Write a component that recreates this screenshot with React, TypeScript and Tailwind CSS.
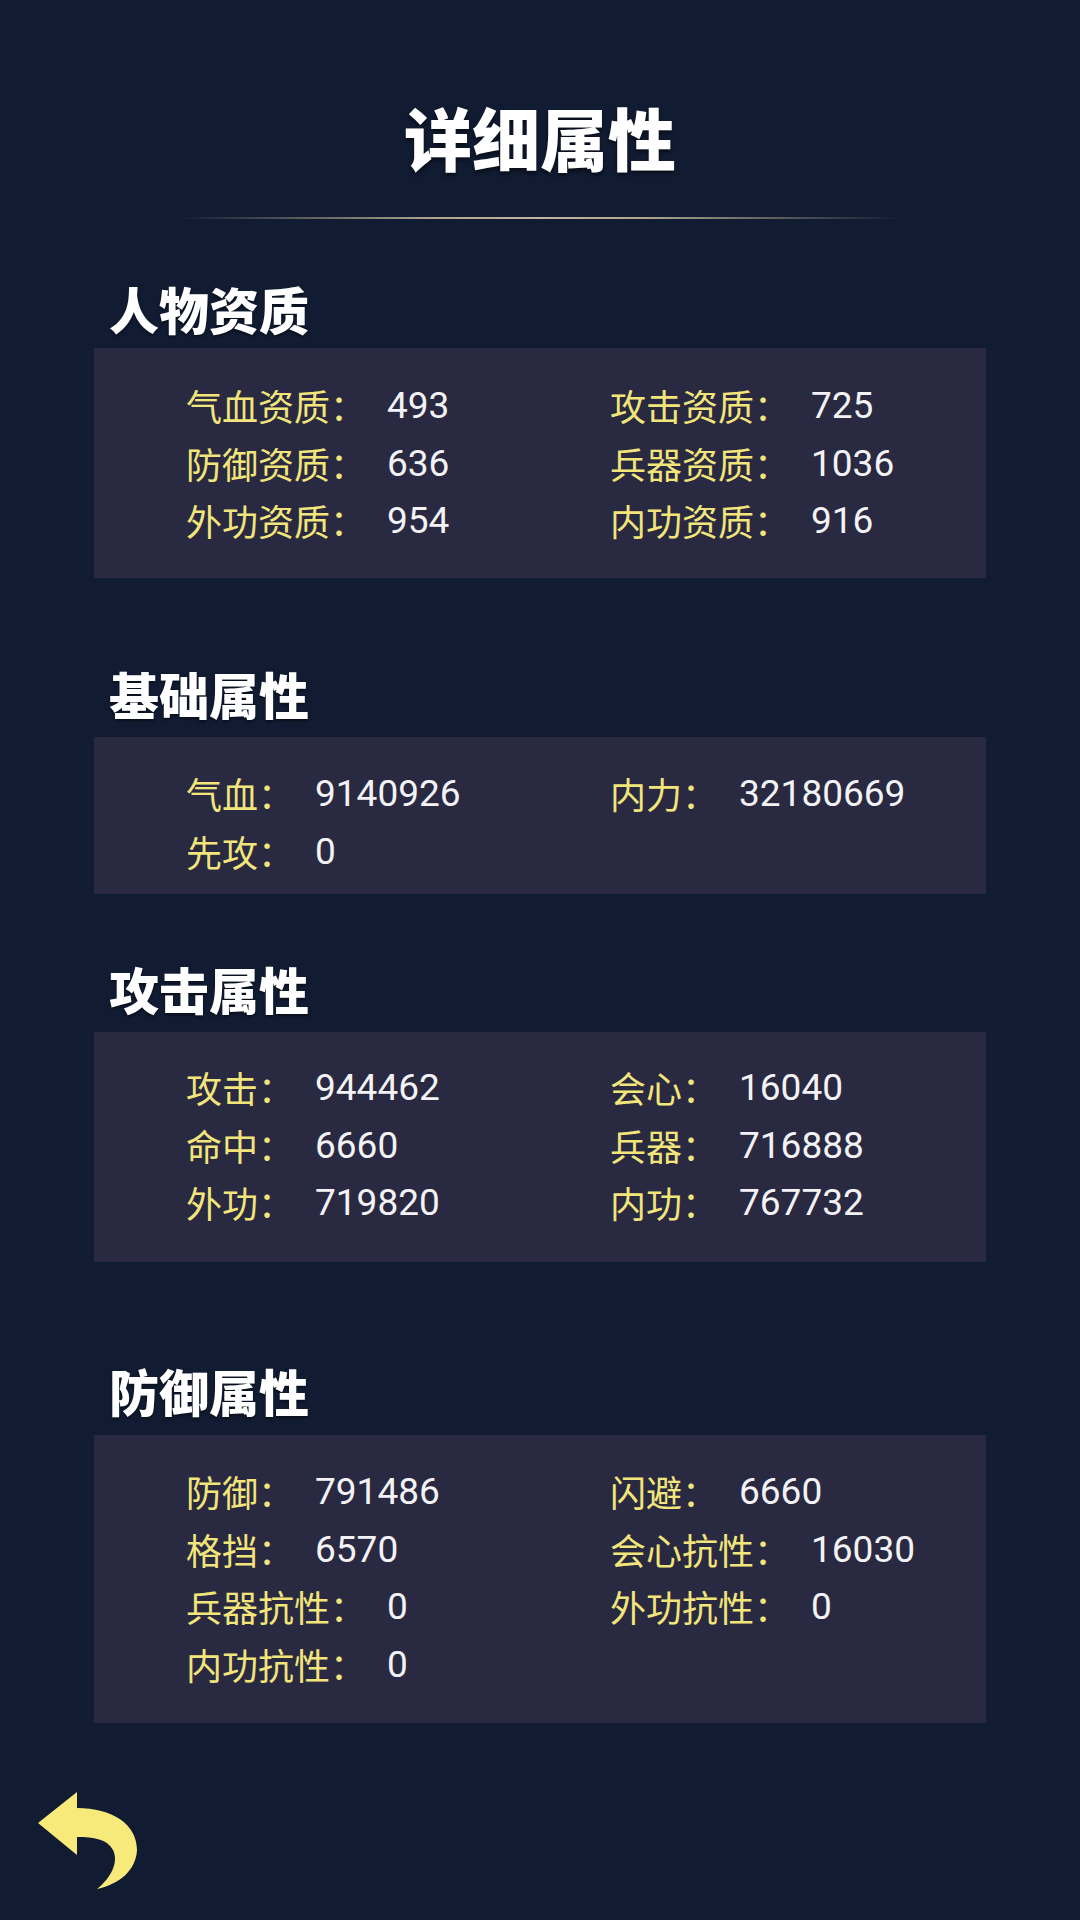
import React from "react";

type Stat = { label: string; value: string };

const sections: { title: string; stats: Stat[]; height: string; pt: string; gap: string; headGap: string }[] = [
  {
    title: "人物资质",
    gap: "mt-[64px]",
    headGap: "mb-[15px]",
    height: "h-[230px]",
    pt: "pt-[29px]",
    stats: [
      { label: "气血资质：", value: "493" },
      { label: "攻击资质：", value: "725" },
      { label: "防御资质：", value: "636" },
      { label: "兵器资质：", value: "1036" },
      { label: "外功资质：", value: "954" },
      { label: "内功资质：", value: "916" },
    ],
  },
  {
    title: "基础属性",
    gap: "mt-[90px]",
    headGap: "mb-[19px]",
    height: "h-[157px]",
    pt: "pt-[28px]",
    stats: [
      { label: "气血：", value: "9140926" },
      { label: "内力：", value: "32180669" },
      { label: "先攻：", value: "0" },
    ],
  },
  {
    title: "攻击属性",
    gap: "mt-[69px]",
    headGap: "mb-[19px]",
    height: "h-[230px]",
    pt: "pt-[27px]",
    stats: [
      { label: "攻击：", value: "944462" },
      { label: "会心：", value: "16040" },
      { label: "命中：", value: "6660" },
      { label: "兵器：", value: "716888" },
      { label: "外功：", value: "719820" },
      { label: "内功：", value: "767732" },
    ],
  },
  {
    title: "防御属性",
    gap: "mt-[103px]",
    headGap: "mb-[20px]",
    height: "h-[288px]",
    pt: "pt-[28px]",
    stats: [
      { label: "防御：", value: "791486" },
      { label: "闪避：", value: "6660" },
      { label: "格挡：", value: "6570" },
      { label: "会心抗性：", value: "16030" },
      { label: "兵器抗性：", value: "0" },
      { label: "外功抗性：", value: "0" },
      { label: "内功抗性：", value: "0" },
    ],
  },
];

function StatCell({ label, value }: Stat) {
  return (
    <div className="flex items-center h-[57.5px] leading-[57.5px] whitespace-nowrap">
      <span className="text-[36px] text-[#f2e57a] font-['Noto_Sans_CJK_SC',sans-serif]">{label}</span>
      <span className="ml-[21px] text-[37px] text-[#f3f3f5] font-['Roboto','Noto_Sans_CJK_SC',sans-serif]">
        {value}
      </span>
    </div>
  );
}

function BackArrow() {
  return (
    <svg width="100" height="100" viewBox="0 0 100 100" aria-hidden>
      <path
        d="M0 33 L39 2 L39 18 C74 18 99 34 99 60 C98 80 82 94 59 99 C73 88 81 72 75 60 C69 49 56 47 39 47 L39 65 Z"
        fill="#f7ea7a"
      />
    </svg>
  );
}

export default function App() {
  return (
    <div className="w-[1080px] h-[1920px] bg-[#111c33] flex flex-col overflow-hidden font-['Noto_Sans_CJK_SC',sans-serif]">
      <h1 className="pt-[103px] text-center text-white text-[68px] leading-[68px] font-black [text-shadow:0_3px_4px_rgba(0,0,0,0.55)]">
        详细属性
      </h1>
      <div className="mt-[46px] mx-auto w-[716px] h-[2px] bg-[linear-gradient(90deg,rgba(170,160,130,0)_0%,rgba(200,190,160,0.85)_35%,rgba(210,200,175,0.9)_50%,rgba(200,190,160,0.85)_65%,rgba(170,160,130,0)_100%)]" />

      {sections.map((s) => (
        <section key={s.title} className={s.gap}>
          <h2
            className={`pl-[109px] text-white text-[50px] leading-[50px] font-black [text-shadow:0_2px_3px_rgba(0,0,0,0.5)] ${s.headGap}`}
          >
            {s.title}
          </h2>
          <div className={`ml-[94px] w-[892px] bg-[#292a42] pl-[92px] ${s.height} ${s.pt}`}>
            <div className="grid grid-cols-[424px_1fr]">
              {s.stats.map((st) => (
                <StatCell key={st.label} {...st} />
              ))}
            </div>
          </div>
        </section>
      ))}

      <div className="mt-[67px] ml-[38px]">
        <BackArrow />
      </div>
    </div>
  );
}
